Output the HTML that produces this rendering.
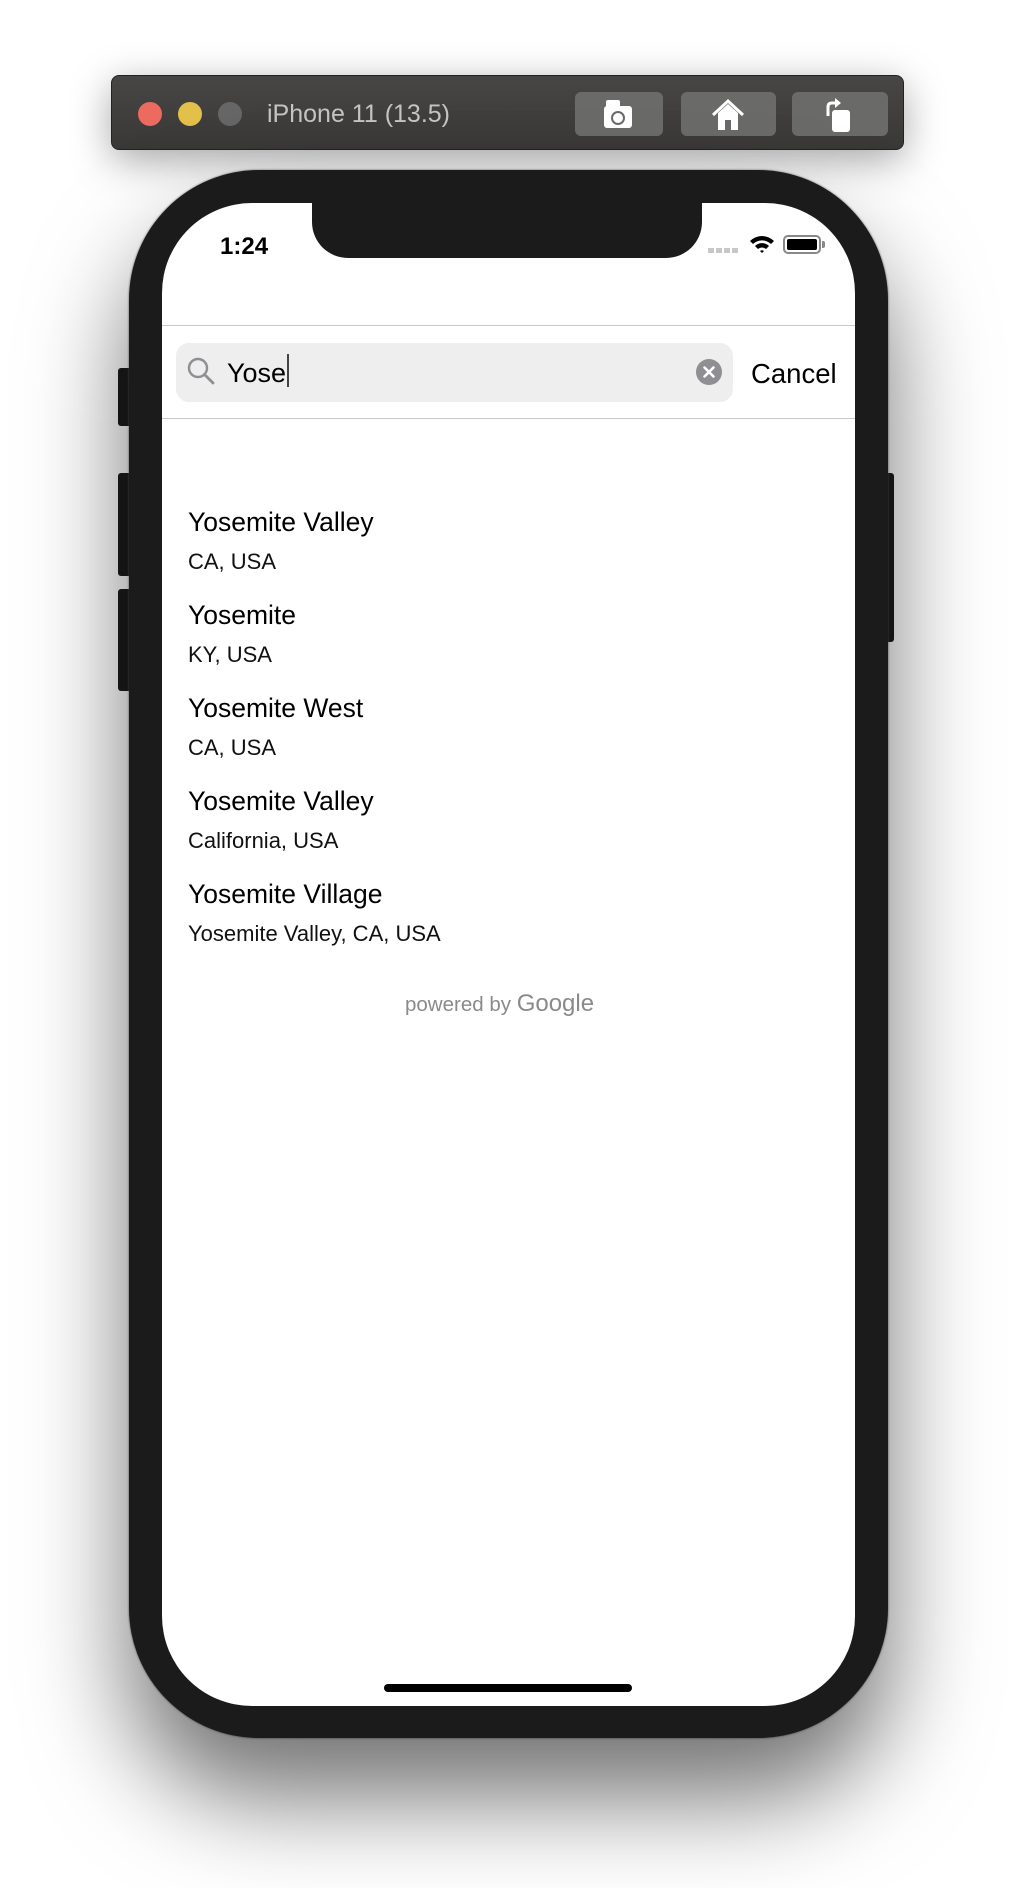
<!DOCTYPE html>
<html><head><meta charset="utf-8"><style>
*{margin:0;padding:0;box-sizing:border-box}
body{width:1016px;height:1888px;background:#fff;position:relative;overflow:hidden;font-family:"Liberation Sans",sans-serif}
.a{position:absolute}
.tb{left:111px;top:75px;width:793px;height:75px;background:linear-gradient(#474645,#393837);border-radius:8px;border:1px solid #222;box-shadow:0 10px 40px rgba(0,0,0,.35)}
.l{width:24px;height:24px;border-radius:50%;top:102px}
.btn{top:92px;height:44px;background:#6a6a69;border-radius:6px}
.phone{left:129px;top:170px;width:759px;height:1568px;background:#1b1b1b;border-radius:130px;box-shadow:0 60px 100px rgba(0,0,0,.55),0 0 2px #666}
.screen{left:162px;top:203px;width:693px;height:1503px;background:#fff;border-radius:90px;overflow:hidden}
.t{font-size:26.5px;color:#000;line-height:26px;left:188px}
.s{font-size:22px;color:#111;line-height:22px;left:188px}
.side{background:#1b1b1b;border-radius:3px}
</style></head><body>
<div class="a tb"></div>
<div class="a l" style="left:138px;background:#ed6a5e"></div>
<div class="a l" style="left:178px;background:#e3c04a"></div>
<div class="a l" style="left:218px;background:#666"></div>
<div class="a" style="left:267px;top:100px;font-size:25px;line-height:28px;color:#c4c4c4">iPhone 11 (13.5)</div>
<div class="a btn" style="left:575px;width:88px"></div>
<div class="a btn" style="left:681px;width:95px"></div>
<div class="a btn" style="left:792px;width:96px"></div>
<svg class="a" style="left:600px;top:98px" width="40" height="34" viewBox="0 0 40 34"><rect x="6" y="2" width="14" height="10" rx="2" fill="#fff"/><rect x="4" y="8" width="28" height="22" rx="3" fill="#fff"/><circle cx="18" cy="20" r="6" fill="none" stroke="#6a6a69" stroke-width="2"/></svg>
<svg class="a" style="left:710px;top:98px" width="36" height="34" viewBox="0 0 36 34"><path d="M3 17 L18 3 L33 17" fill="none" stroke="#fff" stroke-width="3"/><path d="M8 15 L18 6 L28 15 V32 H8Z" fill="#fff"/><rect x="15" y="22" width="6" height="10" fill="#6a6a69"/></svg>
<svg class="a" style="left:820px;top:98px" width="36" height="36" viewBox="0 0 36 36"><rect x="12" y="12" width="18" height="22" rx="3" fill="#fff"/><path d="M8 18 V9 Q8 5 12 5 H16" fill="none" stroke="#fff" stroke-width="3"/><path d="M15 0 L21 5 L15 10Z" fill="#fff"/></svg>
<div class="a side" style="left:118px;top:368px;width:14px;height:58px"></div>
<div class="a side" style="left:118px;top:473px;width:14px;height:103px"></div>
<div class="a side" style="left:118px;top:589px;width:14px;height:102px"></div>
<div class="a side" style="left:884px;top:473px;width:10px;height:169px"></div>
<div class="a phone"></div>
<div class="a screen"></div>
<div class="a" style="left:312px;top:190px;width:390px;height:68px;background:#1b1b1b;border-radius:0 0 36px 36px"></div>
<div class="a" style="left:220px;top:235px;font-size:24px;font-weight:bold;line-height:24px">1:24</div>
<div class="a" style="left:708px;top:248px;width:31px;height:5px;background:repeating-linear-gradient(90deg,#c8c8c8 0 6px,transparent 6px 8px)"></div>
<svg class="a" style="left:749px;top:234px" width="26" height="20" viewBox="0 0 26 20"><path d="M1 7 A17 17 0 0 1 25 7 L22 10 A13 13 0 0 0 4 10Z M6 12 A10 10 0 0 1 20 12 L17 15 A6 6 0 0 0 9 15Z M11 17 A3 3 0 0 1 15 17 L13 19Z" fill="#000"/></svg>
<div class="a" style="left:783px;top:235px;width:38px;height:19px;border:2px solid #888;border-radius:5px;padding:2px"><div style="width:100%;height:100%;background:#000;border-radius:2px"></div></div>
<div class="a" style="left:822px;top:241px;width:3px;height:7px;background:#888;border-radius:0 2px 2px 0"></div>
<div class="a" style="left:162px;top:325px;width:693px;height:1px;background:#c8c8c8"></div>
<div class="a" style="left:162px;top:418px;width:693px;height:1px;background:#c8c8c8"></div>
<div class="a" style="left:176px;top:343px;width:557px;height:59px;background:#eeeeef;border-radius:13px"></div>
<svg class="a" style="left:187px;top:357px" width="30" height="30" viewBox="0 0 30 30"><circle cx="11" cy="11" r="9" fill="none" stroke="#8e8e93" stroke-width="2.4"/><path d="M17.5 17.5 L26 26" stroke="#8e8e93" stroke-width="2.8" stroke-linecap="round"/></svg>
<div class="a" style="left:227px;top:360px;font-size:27px;line-height:27px">Yose</div>
<div class="a" style="left:287px;top:354px;width:2px;height:33px;background:#444"></div>
<svg class="a" style="left:696px;top:359px" width="26" height="26" viewBox="0 0 26 26"><circle cx="13" cy="13" r="13" fill="#8e8e93"/><path d="M8.5 8.5 L17.5 17.5 M17.5 8.5 L8.5 17.5" stroke="#fff" stroke-width="2.6" stroke-linecap="round"/></svg>
<div class="a" style="left:751px;top:360px;font-size:27.5px;line-height:27px">Cancel</div>
<div class="a t" style="top:509px">Yosemite Valley</div><div class="a s" style="top:551px">CA, USA</div>
<div class="a t" style="top:602px">Yosemite</div><div class="a s" style="top:644px">KY, USA</div>
<div class="a t" style="top:695px">Yosemite West</div><div class="a s" style="top:737px">CA, USA</div>
<div class="a t" style="top:788px">Yosemite Valley</div><div class="a s" style="top:830px">California, USA</div>
<div class="a t" style="top:881px">Yosemite Village</div><div class="a s" style="top:923px">Yosemite Valley, CA, USA</div>
<div class="a" style="left:405px;top:992px;font-size:20.5px;line-height:24px;color:#8a8a8a">powered by <span style="font-size:24px;color:#8a8a8a">Google</span></div>
<div class="a" style="left:384px;top:1684px;width:248px;height:8px;background:#000;border-radius:4px"></div>
</body></html>
